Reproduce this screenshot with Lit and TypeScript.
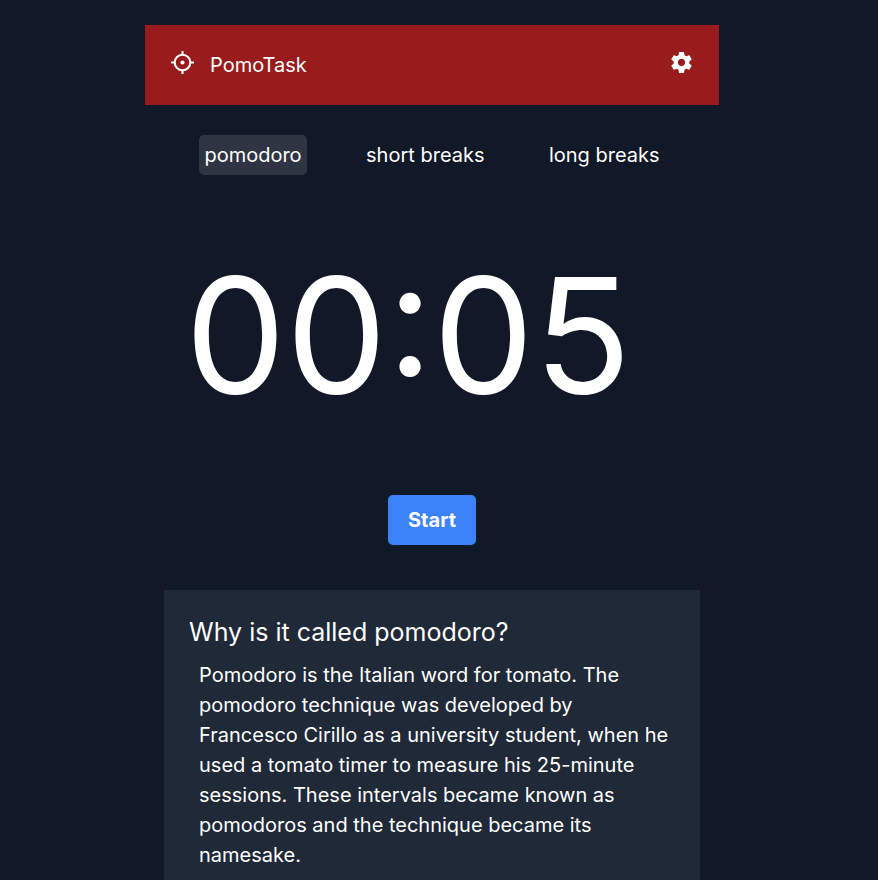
import { LitElement, html, css } from "lit";
import { customElement, state } from "lit/decorators.js";

const MODES = ["pomodoro", "short breaks", "long breaks"];

@customElement("app-root")
export class AppRoot extends LitElement {
  static styles = css`
    :host {
      display: block;
      box-sizing: border-box;
      min-height: 100vh;
      padding: 25px 14px 0 0;
      background: #111827;
      color: #fff;
      font: 20px/30px Inter, "Liberation Sans", sans-serif;
    }
    .page {
      box-sizing: border-box;
      width: 100%;
      max-width: 574px;
      margin: 0 auto;
    }
    button {
      border: 0;
      margin: 0;
      font: inherit;
      color: inherit;
      background: none;
      cursor: pointer;
    }
    .bar {
      display: flex;
      align-items: center;
      justify-content: space-between;
      height: 80px;
      padding: 0 25px;
      background: #991b1b;
    }
    .brand {
      display: flex;
      align-items: center;
      gap: 15px;
    }
    .title {
      margin: 0;
      font: inherit;
    }
    .icon {
      display: block;
      width: 25px;
      height: 25px;
      margin-bottom: 5px;
    }
    .settings {
      padding: 0;
    }
    .tabs {
      display: flex;
      justify-content: space-evenly;
      margin-top: 30px;
    }
    .tab {
      padding: 5px;
      border-radius: 5px;
    }
    .tab.active {
      background: #2e3442;
    }
    .time {
      margin: 80px 0 0;
      padding-left: 40px;
      font-size: 160px;
      line-height: 160px;
    }
    .actions {
      display: flex;
      justify-content: center;
      margin-top: 80px;
    }
    .start {
      padding: 10px 20px;
      border-radius: 5px;
      background: #3b82f6;
      font-weight: 700;
    }
    .info {
      margin: 45px 19px 0;
      padding: 25px 25px 0;
      min-height: 300px;
      background: #1f2937;
    }
    .heading {
      margin: 0;
      font-size: 25px;
      line-height: 35px;
      font-weight: 400;
    }
    .text {
      margin: 0;
      padding: 10px 5px 10px 10px;
    }
  `;

  @state() private mode = MODES[0];

  render() {
    return html`
      <div class="page">
        <header class="bar">
          <div class="brand">
            <svg class="icon" viewBox="0 0 24 24" fill="none" stroke="currentColor" stroke-width="2" aria-hidden="true">
              <circle cx="12" cy="12" r="7.5" />
              <path d="M12 1v4M12 19v4M1 12h4M19 12h4" />
              <circle cx="12" cy="12" r="2" fill="currentColor" stroke="none" />
            </svg>
            <h1 class="title">PomoTask</h1>
          </div>
          <button class="settings" aria-label="Settings">
            <svg class="icon" viewBox="0 0 24 24" fill="currentColor" aria-hidden="true">
              <path
                d="M19.43 12.98c.04-.32.07-.64.07-.98s-.03-.66-.07-.98l2.11-1.65c.19-.15.24-.42.12-.64l-2-3.46c-.12-.22-.39-.3-.61-.22l-2.49 1c-.52-.4-1.08-.73-1.69-.98l-.38-2.65C14.46 2.18 14.25 2 14 2h-4c-.25 0-.46.18-.49.42l-.38 2.65c-.61.25-1.17.59-1.69.98l-2.49-1c-.23-.09-.49 0-.61.22l-2 3.46c-.13.22-.07.49.12.64l2.11 1.65c-.04.32-.07.65-.07.98s.03.66.07.98l-2.11 1.65c-.19.15-.24.42-.12.64l2 3.46c.12.22.39.3.61.22l2.49-1c.52.4 1.08.73 1.69.98l.38 2.65c.03.24.24.42.49.42h4c.25 0 .46-.18.49-.42l.38-2.65c.61-.25 1.17-.59 1.69-.98l2.49 1c.23.09.49 0 .61-.22l2-3.46c.12-.22.07-.49-.12-.64l-2.11-1.65zM12 15.5c-1.93 0-3.5-1.57-3.5-3.5s1.57-3.5 3.5-3.5 3.5 1.57 3.5 3.5-1.57 3.5-3.5 3.5z"
              />
            </svg>
          </button>
        </header>
        <nav class="tabs" aria-label="Timer mode">
          ${MODES.map(
            (m) => html`<button
              class="tab ${m === this.mode ? "active" : ""}"
              aria-pressed=${m === this.mode ? "true" : "false"}
              @click=${() => (this.mode = m)}
            >${m}</button>`
          )}
        </nav>
        <p class="time" role="timer">00:05</p>
        <div class="actions"><button class="start">Start</button></div>
        <section class="info">
          <h2 class="heading">Why is it called pomodoro?</h2>
          <p class="text">
            Pomodoro is the Italian word for tomato. The pomodoro technique was developed by
            Francesco Cirillo as a university student, when he used a tomato timer to measure his
            25-minute sessions. These intervals became known as pomodoros and the technique became
            its namesake.
          </p>
        </section>
      </div>
    `;
  }
}
